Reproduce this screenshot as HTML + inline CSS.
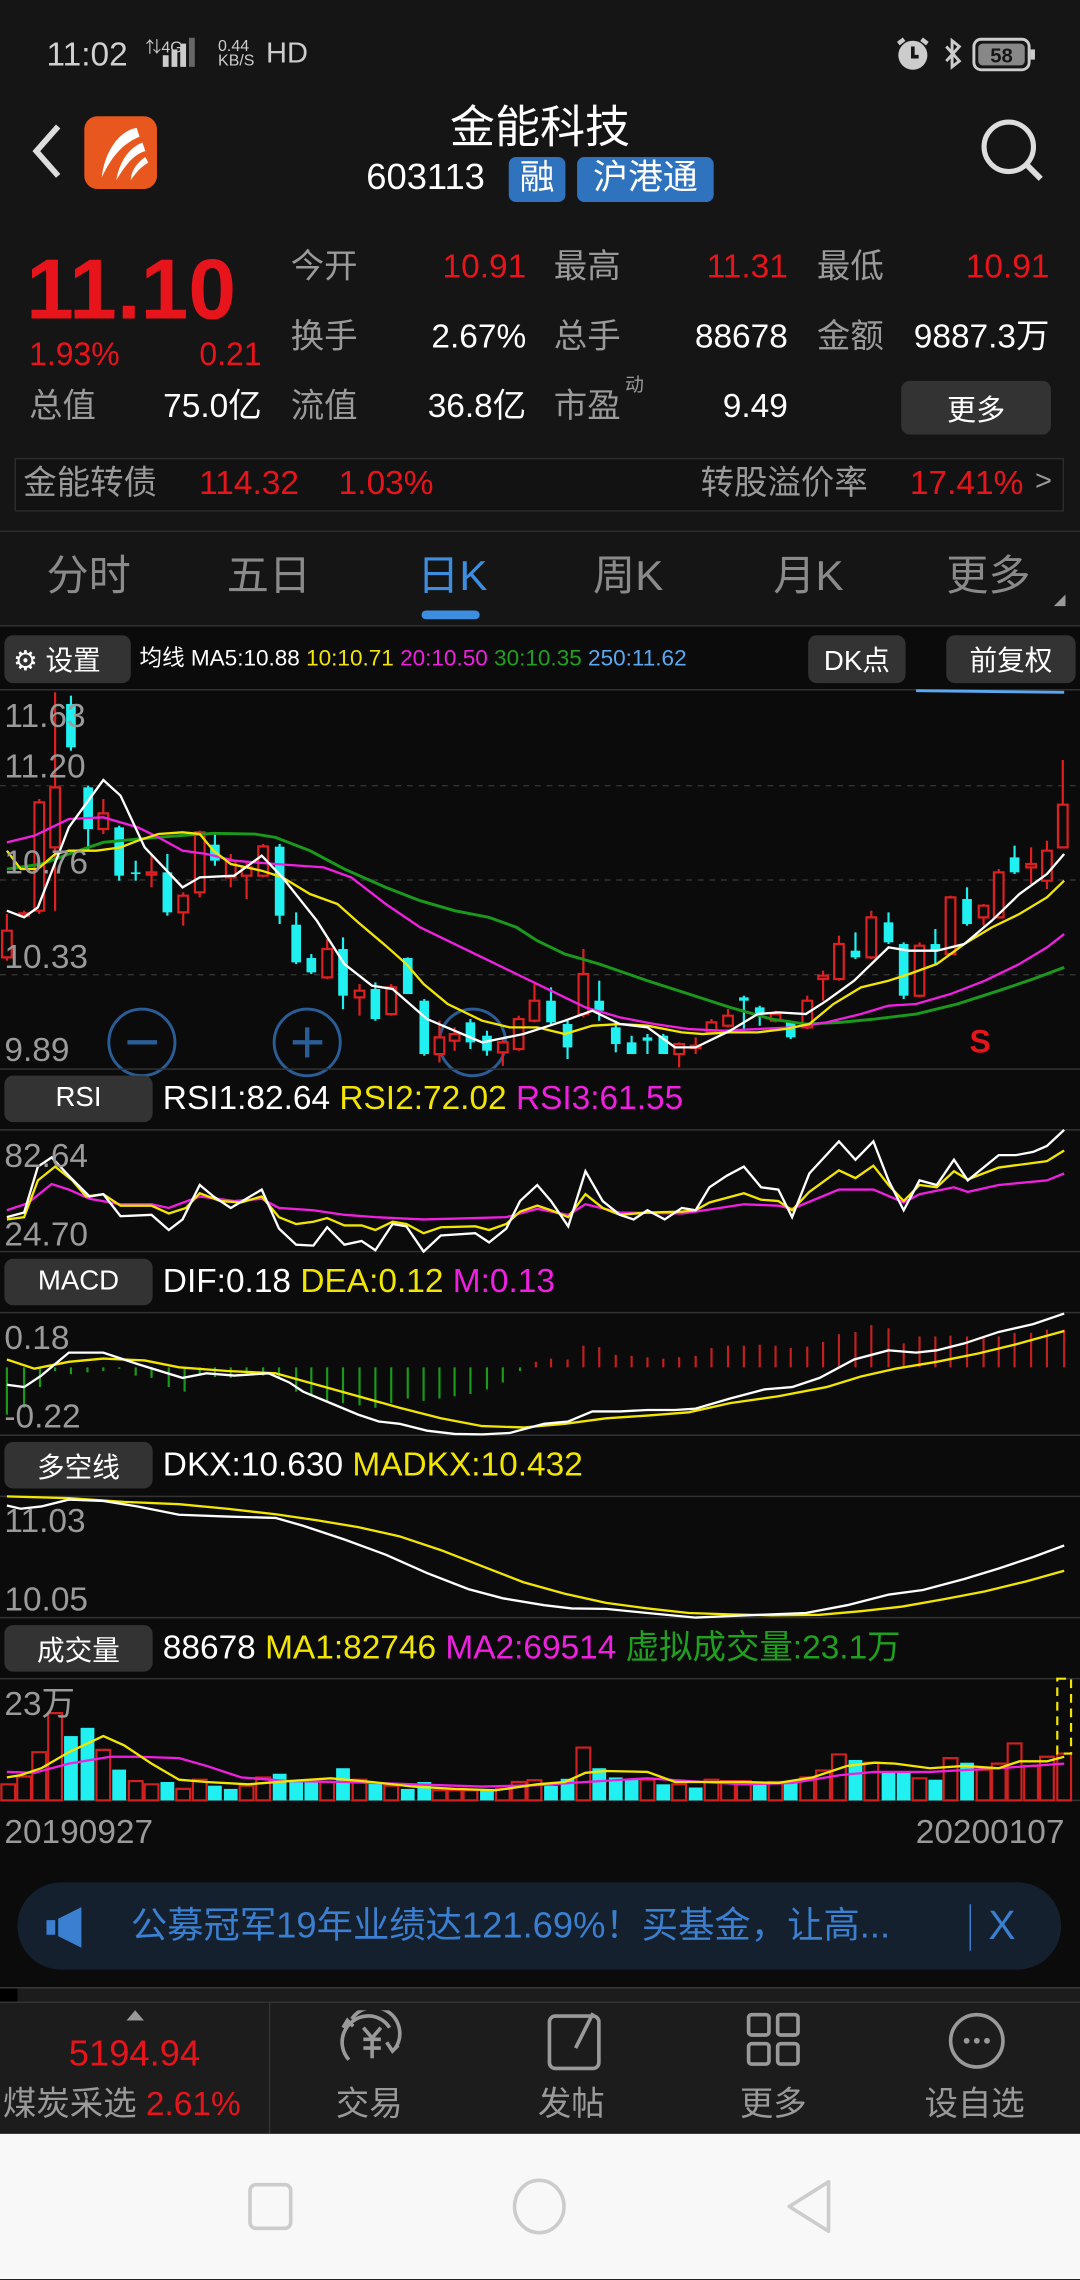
<!DOCTYPE html>
<html><head><meta charset="utf-8"><style>
*{margin:0;padding:0;box-sizing:border-box}
html,body{width:1080px;height:2280px;overflow:hidden;background:#0b0b0b}
#w{position:absolute;left:0;top:0;width:743px;height:1568px;transform:scale(1.45357);transform-origin:0 0;background:#0b0b0b;font-family:"Liberation Sans","Noto Sans CJK SC",sans-serif;color:#fff;overflow:hidden}
.a{position:absolute;white-space:nowrap;line-height:1}
.g{color:#9a9a9a}.r{color:#e8141b}.y{color:#f2e600}.m{color:#f020e0}.gr{color:#1fa01f}.b{color:#5aa8f0}
.btn{position:absolute;background:#333;border-radius:6px;color:#fff;display:flex;align-items:center;justify-content:center}
.hl{position:absolute;left:0;width:743px;height:1px;background:#2e2e2e}
.rt{text-align:right}
</style></head><body><div id="w">
<div style="position:absolute;left:0;top:0;width:743px;height:430px;background:#151515"></div>
<!-- status -->
<div class="a" style="left:32px;top:26px;font-size:23px;color:#d0d0d0">11:02</div>
<div class="a" style="left:100px;top:28px;font-size:11px;color:#ccc">⇅4G</div>
<div style="position:absolute;left:112px;top:38px;width:4px;height:8px;background:#ccc"></div>
<div style="position:absolute;left:118px;top:34px;width:4px;height:12px;background:#ccc"></div>
<div style="position:absolute;left:124px;top:30px;width:4px;height:16px;background:#ccc"></div>
<div style="position:absolute;left:130px;top:26px;width:4px;height:20px;background:#666"></div>
<div class="a" style="left:150px;top:27px;font-size:11px;color:#ccc;line-height:10px">0.44<br>KB/S</div>
<div class="a" style="left:183px;top:27px;font-size:20px;color:#ccc">HD</div>
<svg style="position:absolute;left:614px;top:24px" width="100" height="28"><circle cx="14" cy="14" r="10" fill="#ccc"/><path d="M14 8v7h4" stroke="#151515" stroke-width="2.5" fill="none"/><path d="M4 6l4-3M24 6l-4-3" stroke="#ccc" stroke-width="3"/><path d="M37 8l9 10-5 4V4l5 4-9 10" stroke="#ccc" stroke-width="2" fill="none"/><rect x="56" y="3" width="38" height="21" rx="5" fill="none" stroke="#ccc" stroke-width="2"/><rect x="59" y="6" width="32" height="15" rx="3" fill="#888"/><rect x="95" y="10" width="3" height="7" fill="#ccc"/><text x="75" y="19" font-size="14" fill="#151515" text-anchor="middle" font-weight="bold" font-family="Liberation Sans">58</text></svg>
<!-- header -->
<svg style="position:absolute;left:18px;top:84px" width="30" height="40"><path d="M22 3L7 20l15 17" stroke="#ddd" stroke-width="4" fill="none"/></svg>
<div style="position:absolute;left:58px;top:80px;width:50px;height:50px;border-radius:9px;background:#e8581e"></div>
<svg style="position:absolute;left:58px;top:80px" width="50" height="50"><path d="M36 8C24 10 14 24 12 42 18 30 24 20 38 14ZM40 18C30 22 24 32 22 44 28 34 34 26 42 24ZM42 28C36 32 32 38 32 44 36 38 40 34 44 32Z" fill="#fff"/></svg>
<div class="a" style="left:0;width:743px;text-align:center;top:72px;font-size:31px">金能科技</div>
<div class="a" style="left:252px;top:110px;font-size:25px">603113</div>
<div class="a" style="left:350px;top:108px;width:39px;height:31px;background:#2f73bf;border-radius:5px;font-size:24px;text-align:center;padding-top:3px">融</div>
<div class="a" style="left:397px;top:108px;width:94px;height:31px;background:#2f73bf;border-radius:5px;font-size:24px;text-align:center;padding-top:3px">沪港通</div>
<svg style="position:absolute;left:672px;top:80px" width="50" height="50"><circle cx="22" cy="21" r="17" stroke="#ddd" stroke-width="3.5" fill="none"/><path d="M34 33l10 10" stroke="#ddd" stroke-width="4"/></svg>
<!-- price block -->
<div class="a r" style="left:18px;top:170px;font-size:59px;font-weight:bold">11.10</div>
<div class="a r" style="left:20px;top:233px;font-size:22px">1.93%</div>
<div class="a r rt" style="left:100px;width:80px;top:233px;font-size:22px">0.21</div>
<div class="a g" style="left:20px;top:268px;font-size:23px">总值</div>
<div class="a rt" style="left:80px;width:100px;top:268px;font-size:23px">75.0亿</div>
<div class="a g" style="left:200px;top:172px;font-size:23px">今开</div><div class="a r rt" style="left:262px;width:100px;top:172px;font-size:23px">10.91</div>
<div class="a g" style="left:381px;top:172px;font-size:23px">最高</div><div class="a r rt" style="left:442px;width:100px;top:172px;font-size:23px">11.31</div>
<div class="a g" style="left:562px;top:172px;font-size:23px">最低</div><div class="a r rt" style="left:622px;width:100px;top:172px;font-size:23px">10.91</div>
<div class="a g" style="left:200px;top:220px;font-size:23px">换手</div><div class="a rt" style="left:262px;width:100px;top:220px;font-size:23px">2.67%</div>
<div class="a g" style="left:381px;top:220px;font-size:23px">总手</div><div class="a rt" style="left:442px;width:100px;top:220px;font-size:23px">88678</div>
<div class="a g" style="left:562px;top:220px;font-size:23px">金额</div><div class="a rt" style="left:602px;width:120px;top:220px;font-size:23px">9887.3万</div>
<div class="a g" style="left:200px;top:268px;font-size:23px">流值</div><div class="a rt" style="left:262px;width:100px;top:268px;font-size:23px">36.8亿</div>
<div class="a g" style="left:381px;top:268px;font-size:23px">市盈</div><div class="a g" style="left:430px;top:258px;font-size:13px">动</div><div class="a rt" style="left:442px;width:100px;top:268px;font-size:23px">9.49</div>
<div class="btn" style="left:620px;top:262px;width:103px;height:37px;font-size:20px">更多</div>
<div style="position:absolute;left:10px;top:315px;width:722px;height:37px;border:1px solid #2c2c2c;background:#121212"></div>
<div class="a g" style="left:16px;top:321px;font-size:23px">金能转债</div>
<div class="a r" style="left:137px;top:321px;font-size:23px">114.32</div>
<div class="a r" style="left:233px;top:321px;font-size:23px">1.03%</div>
<div class="a g" style="left:482px;top:321px;font-size:23px">转股溢价率</div>
<div class="a r" style="left:626px;top:321px;font-size:23px">17.41%</div>
<div class="a g" style="left:712px;top:321px;font-size:20px">&gt;</div>
<div class="hl" style="top:365px"></div>
<div class="a g" style="left:32px;top:383px;font-size:29px;color:#8a8a8a">分时</div>
<div class="a g" style="left:156px;top:383px;font-size:29px;color:#8a8a8a">五日</div>
<div class="a" style="left:287px;top:383px;font-size:29px;color:#3d8ee0">日K</div>
<div class="a g" style="left:408px;top:383px;font-size:29px;color:#8a8a8a">周K</div>
<div class="a g" style="left:532px;top:383px;font-size:29px;color:#8a8a8a">月K</div>
<div class="a g" style="left:651px;top:383px;font-size:29px;color:#8a8a8a">更多</div>
<div style="position:absolute;left:290px;top:420px;width:40px;height:6px;border-radius:3px;background:#3d8ee0"></div>
<svg style="position:absolute;left:724px;top:408px" width="10" height="10"><path d="M9 1V9H1Z" fill="#999"/></svg>
<div class="hl" style="top:430px;background:#333"></div>
<!-- toolbar -->
<div class="btn" style="left:3px;top:437px;width:87px;height:33px;font-size:19px;justify-content:flex-start;padding-left:6px">⚙&nbsp;设置</div>
<div class="a" style="left:96px;top:446px;font-size:15.5px">均线 MA5:10.88 <span class="y">10:10.71</span> <span class="m">20:10.50</span> <span class="gr">30:10.35</span> <span class="b">250:11.62</span></div>
<div class="btn" style="left:556px;top:437px;width:67px;height:33px;font-size:19px">DK点</div>
<div class="btn" style="left:651px;top:437px;width:89px;height:33px;font-size:19px">前复权</div>
<div class="hl" style="top:474px;background:#333"></div>
<!-- main chart svg -->
<svg style="position:absolute;left:0;top:426.6px" width="743" height="344" viewBox="0 0 1568 1500" preserveAspectRatio="none">
<g stroke="#333" stroke-dasharray="4 4" vector-effect="non-scaling-stroke"><path d="M0 495H1568M0 778H1568M0 1062H1568" vector-effect="non-scaling-stroke"/></g>
<path d="M1330 210L1545 215" stroke="#5aa8f0" stroke-width="2" vector-effect="non-scaling-stroke"/>
<g fill="none" stroke-width="2" vector-effect="non-scaling-stroke">
<ellipse cx="206" cy="1265" rx="48" ry="100" stroke="#2a5d95" vector-effect="non-scaling-stroke"/>
<ellipse cx="446" cy="1265" rx="48" ry="100" stroke="#2a5d95" vector-effect="non-scaling-stroke"/>
<ellipse cx="686" cy="1265" rx="48" ry="100" stroke="#2a5d95" vector-effect="non-scaling-stroke"/>
<path d="M185 1265H228M425 1265H468M446 1220V1310" stroke="#2a5d95" stroke-width="3" vector-effect="non-scaling-stroke"/>
</g>
<g id="cd" stroke-width="1.5">
<script></script>
</g>
<g fill="none" stroke-width="1.6">
<polyline vector-effect="non-scaling-stroke" stroke="#1a9a1a" stroke-width="2" points="10,745 60,730 100,700 150,665 200,655 260,645 310,638 370,640 400,650 450,690 500,745 560,800 610,840 660,870 710,890 750,920 780,960 820,1000 870,1030 940,1080 1000,1120 1060,1160 1120,1195 1170,1210 1220,1205 1270,1195 1330,1180 1390,1150 1450,1110 1500,1075 1545,1040"/>
<polyline vector-effect="non-scaling-stroke" stroke="#f020e0" points="10,665 50,645 100,595 150,590 200,620 230,650 265,690 300,700 340,720 400,730 470,740 510,770 560,850 610,920 660,970 710,1020 760,1070 800,1110 850,1160 900,1190 950,1210 1000,1225 1050,1230 1100,1225 1150,1220 1200,1205 1250,1180 1290,1155 1330,1150 1380,1120 1430,1080 1480,1030 1520,980 1545,940"/>
<polyline vector-effect="non-scaling-stroke" stroke="#f2e600" points="10,690 30,745 55,745 80,700 100,690 140,690 175,680 200,660 230,640 265,635 290,640 310,690 335,730 380,750 410,770 450,820 490,850 520,905 560,975 590,1030 615,1090 650,1150 700,1200 740,1220 780,1220 820,1240 860,1215 900,1210 940,1215 990,1235 1020,1240 1060,1235 1100,1235 1140,1225 1175,1210 1210,1150 1250,1100 1290,1080 1320,1060 1360,1030 1400,970 1440,920 1480,880 1520,830 1545,780"/>
<polyline vector-effect="non-scaling-stroke" stroke="#fff" points="10,870 35,890 55,860 100,620 150,478 175,525 210,680 265,800 290,770 340,765 380,705 410,770 460,900 500,1030 540,1095 570,1105 620,1195 700,1265 760,1240 820,1200 860,1170 900,1210 940,1220 980,1280 1010,1280 1060,1230 1100,1180 1130,1175 1170,1180 1200,1140 1240,1080 1290,980 1320,990 1360,990 1400,970 1440,900 1480,820 1520,760 1545,700"/>
</g>
</svg>
<div class="a g" style="left:3px;top:481px;font-size:23px">11.63</div>
<div class="a g" style="left:3px;top:516px;font-size:23px">11.20</div>
<div class="a g" style="left:3px;top:582px;font-size:23px">10.76</div>
<div class="a g" style="left:3px;top:647px;font-size:23px">10.33</div>
<div class="a g" style="left:3px;top:711px;font-size:23px">9.89</div>
<div class="a r" style="left:667px;top:706px;font-size:22px;font-weight:bold">S</div>
<div class="hl" style="top:735px;background:#333"></div>
<!-- sub labels -->
<div class="btn" style="left:3px;top:740px;width:102px;height:32px;font-size:19px">RSI</div>
<div class="a" style="left:112px;top:744px;font-size:23px">RSI1:82.64 <span class="y">RSI2:72.02</span> <span class="m">RSI3:61.55</span></div>
<div class="btn" style="left:3px;top:866px;width:102px;height:32px;font-size:19px">MACD</div>
<div class="a" style="left:112px;top:870px;font-size:23px">DIF:0.18 <span class="y">DEA:0.12</span> <span class="m">M:0.13</span></div>
<div class="btn" style="left:3px;top:992px;width:102px;height:32px;font-size:19px">多空线</div>
<div class="a" style="left:112px;top:996px;font-size:23px">DKX:10.630 <span class="y">MADKX:10.432</span></div>
<div class="btn" style="left:3px;top:1118px;width:102px;height:32px;font-size:19px">成交量</div>
<div class="a" style="left:112px;top:1122px;font-size:23px">88678 <span class="y">MA1:82746</span> <span class="m">MA2:69514</span> <span class="gr">虚拟成交量:23.1万</span></div>
<svg style="position:absolute;left:0;top:770.6px" width="743" height="495.4" viewBox="0 0 1568 1568" preserveAspectRatio="none">
<g stroke="#333" stroke-width="1"><path vector-effect="non-scaling-stroke" d="M0 20H1568M0 285H1568M0 418H1568M0 685H1568M0 818H1568M0 1082H1568M0 1215H1568M0 1480H1568"/></g>
<g fill="none" stroke-width="1.6">
<polyline vector-effect="non-scaling-stroke" stroke="#f020e0" points="10,195 40,180 75,138 100,150 130,170 175,182 220,182 245,190 290,165 340,175 380,170 405,190 455,195 500,205 545,210 615,215 690,212 735,210 780,192 825,205 850,182 900,200 990,202 1010,198 1080,182 1130,185 1150,192 1218,150 1268,150 1312,178 1335,160 1385,145 1405,155 1450,140 1520,130 1545,115"/>
<polyline vector-effect="non-scaling-stroke" stroke="#f2e600" points="10,215 35,210 55,130 80,100 105,130 125,165 150,160 175,185 220,185 245,202 270,190 290,158 320,175 350,178 380,165 405,210 430,225 455,220 475,212 500,228 525,228 545,238 570,220 590,225 615,245 640,232 690,230 710,238 735,225 755,198 780,185 800,195 825,210 850,160 875,190 900,205 940,200 990,198 1010,195 1030,178 1080,158 1105,172 1130,175 1150,195 1175,155 1218,108 1242,125 1268,98 1290,140 1312,175 1335,140 1360,145 1385,110 1405,128 1450,102 1520,88 1545,65"/>
<polyline vector-effect="non-scaling-stroke" stroke="#fff" points="10,210 35,200 55,100 75,80 100,120 130,165 150,160 175,208 220,205 245,238 265,215 290,140 310,165 335,190 380,150 405,235 430,270 455,272 475,232 500,270 525,262 545,282 570,225 590,230 615,285 640,250 690,245 710,265 735,235 755,175 780,140 800,175 825,230 850,110 875,175 900,205 920,215 940,195 965,215 990,190 1010,195 1030,145 1055,120 1080,100 1105,145 1130,150 1150,210 1175,115 1218,45 1242,85 1268,45 1290,130 1312,195 1335,130 1360,140 1385,85 1405,130 1450,75 1475,75 1500,68 1520,55 1545,20"/>
</g>
<g stroke="#1a9a1a" stroke-width="1.5"><path vector-effect="non-scaling-stroke" d="M10 537V640M35 537V625M58 537V580M80 537V545M103 537V552M127 537V548M150 537V545M173 537V540M197 537V555M220 537V560M245 537V580M268 537V590M290 537V555M312 537V558M335 537V560M358 537V555M382 537V555M405 537V560M430 537V590M452 537V600M475 537V610M498 537V615M522 537V620M545 537V625M568 537V615M592 537V605M615 537V610M638 537V605M660 537V600M683 537V595M707 537V585M730 537V570M755 537V545"/></g>
<g stroke="#c02020" stroke-width="1.5"><path vector-effect="non-scaling-stroke" d="M778 537V525M800 537V518M824 537V520M847 537V490M870 537V493M894 537V510M917 537V512M940 537V515M963 537V518M986 537V515M1010 537V512M1033 537V495M1057 537V490M1080 537V490M1103 537V488M1126 537V490M1148 537V495M1172 537V492M1195 537V482M1218 537V465M1242 537V460M1265 537V445M1290 537V452M1312 537V485M1335 537V470M1358 537V470M1380 537V468M1404 537V470M1428 537V470M1450 537V470M1473 537V462M1497 537V462M1520 537V455M1545 537V455"/></g>
<g fill="none" stroke-width="1.6">
<polyline vector-effect="non-scaling-stroke" stroke="#f2e600" points="10,520 50,540 100,525 150,518 210,522 260,537 330,545 400,550 460,575 520,600 580,625 640,648 700,665 760,668 820,660 880,648 940,642 1000,635 1060,615 1130,600 1200,580 1250,557 1300,540 1360,525 1420,507 1480,485 1545,458"/>
<polyline vector-effect="non-scaling-stroke" stroke="#fff" points="10,575 35,580 60,555 100,505 150,505 200,530 265,560 300,550 340,555 390,550 420,570 440,590 480,615 520,640 550,655 580,660 620,675 660,682 700,683 740,680 790,660 825,655 860,633 900,633 940,630 980,630 1010,627 1060,605 1110,585 1150,580 1190,560 1240,520 1290,500 1330,505 1360,500 1400,485 1450,460 1500,443 1545,420"/>
<polyline vector-effect="non-scaling-stroke" stroke="#f2e600" points="10,818 100,822 180,830 260,835 330,845 400,857 460,870 520,885 580,905 640,935 700,970 760,1005 820,1030 880,1050 940,1062 1000,1072 1060,1075 1120,1077 1190,1076 1250,1068 1310,1058 1370,1042 1430,1025 1490,1003 1545,980"/>
<polyline vector-effect="non-scaling-stroke" stroke="#fff" points="10,838 30,845 60,840 100,825 150,828 200,840 260,858 330,862 400,865 440,882 500,912 560,945 620,985 680,1020 730,1040 790,1055 830,1062 880,1063 940,1072 1010,1082 1070,1078 1120,1075 1170,1072 1230,1055 1290,1032 1340,1022 1400,998 1450,975 1500,950 1545,925"/>
</g>
<g id="vol"></g>
<rect x="1535" y="1215" width="20" height="163" fill="none" stroke="#f2e600" stroke-dasharray="6 4" vector-effect="non-scaling-stroke" stroke-width="1.5"/>
<g fill="none" stroke-width="1.6">
<polyline vector-effect="non-scaling-stroke" stroke="#f020e0" points="10,1418 50,1420 100,1400 160,1385 200,1385 260,1388 300,1405 350,1430 420,1438 500,1440 600,1445 700,1450 780,1447 850,1440 940,1432 1000,1438 1080,1445 1150,1442 1220,1425 1270,1418 1350,1418 1450,1410 1545,1400"/>
<polyline vector-effect="non-scaling-stroke" stroke="#f2e600" points="10,1430 30,1425 60,1410 100,1375 150,1340 180,1360 220,1400 260,1435 300,1440 360,1445 420,1438 480,1432 540,1440 600,1450 660,1455 720,1458 780,1445 820,1440 850,1420 880,1416 940,1418 980,1440 1030,1440 1080,1440 1130,1442 1180,1430 1230,1405 1270,1398 1300,1400 1350,1410 1400,1405 1450,1410 1480,1395 1520,1395 1545,1385"/>
</g>
</svg>
<div class="a g" style="left:3px;top:784px;font-size:23px">82.64</div>
<div class="a g" style="left:3px;top:838px;font-size:23px">24.70</div>
<div class="a g" style="left:3px;top:909px;font-size:23px">0.18</div>
<div class="a g" style="left:3px;top:963px;font-size:23px">-0.22</div>
<div class="a g" style="left:3px;top:1035px;font-size:23px">11.03</div>
<div class="a g" style="left:3px;top:1089px;font-size:23px">10.05</div>
<div class="a g" style="left:3px;top:1161px;font-size:23px">23万</div>
<div class="a g" style="left:3px;top:1249px;font-size:23px">20190927</div>
<div class="a g" style="left:630px;top:1249px;font-size:23px">20200107</div>
<!-- ad -->
<div style="position:absolute;left:12px;top:1295px;width:718px;height:60px;border-radius:30px;background:#15202e"></div>
<svg style="position:absolute;left:30px;top:1310px" width="36" height="32"><path d="M2 11h6v10H2zM10 10L26 2v28L10 22z" fill="#3a7fd0"/></svg>
<div class="a" style="left:90px;top:1313px;font-size:25px;color:#3a7fd0">公募冠军19年业绩达121.69%！买基金，让高...</div>
<div style="position:absolute;left:667px;top:1310px;width:1px;height:32px;background:#3a7fd0"></div>
<div class="a" style="left:680px;top:1311px;font-size:28px;color:#3a7fd0">X</div>
<div class="hl" style="top:1367px;background:#3a3a3a"></div>
<div style="position:absolute;left:0;top:1368px;width:743px;height:100px;background:#1c1c1c"></div>
<div style="position:absolute;left:0;top:1368px;width:12px;height:9px;background:#000"></div>
<div class="hl" style="top:1377px;background:#333"></div>
<div style="position:absolute;left:185px;top:1378px;width:1px;height:90px;background:#333"></div>
<svg style="position:absolute;left:86px;top:1381px" width="14" height="10"><path d="M1 9L7 2l6 7z" fill="#999"/></svg>
<div class="a r" style="left:0;width:185px;text-align:center;top:1401px;font-size:25px">5194.94</div>
<div class="a" style="left:2px;top:1436px;font-size:23px;color:#9a9a9a">煤炭采选 <span class="r">2.61%</span></div>
<svg style="position:absolute;left:232px;top:1383px" width="330" height="42" fill="none" stroke="#999" stroke-width="2.5">
<path d="M36 12A17 17 0 0 0 20 4A18 18 0 0 0 8 34"/><path d="M10 6A18 18 0 0 1 40 26" /><path d="M4 12l3-5 4 4M34 22l4 6 4-4"/><path d="M18 12l6 7 6-7M24 19v14M18 20h12M18 26h12"/>
<rect x="146" y="4" width="34" height="36" rx="4"/><path d="M176 2l-12 24"/>
<rect x="283" y="3" width="14" height="14" rx="2"/><rect x="303" y="3" width="14" height="14" rx="2"/><rect x="283" y="23" width="14" height="14" rx="2"/><rect x="303" y="23" width="14" height="14" rx="2"/>
</svg>
<svg style="position:absolute;left:650px;top:1383px" width="44" height="42"><circle cx="22" cy="21" r="18" fill="none" stroke="#999" stroke-width="2.5"/><circle cx="15" cy="21" r="2" fill="#999"/><circle cx="22" cy="21" r="2" fill="#999"/><circle cx="29" cy="21" r="2" fill="#999"/></svg>
<div class="a" style="left:231px;top:1436px;font-size:23px;color:#9a9a9a">交易</div>
<div class="a" style="left:370px;top:1436px;font-size:23px;color:#9a9a9a">发帖</div>
<div class="a" style="left:509px;top:1436px;font-size:23px;color:#9a9a9a">更多</div>
<div class="a" style="left:636px;top:1436px;font-size:23px;color:#9a9a9a">设自选</div>
<div style="position:absolute;left:0;top:1468px;width:743px;height:100px;background:#f8f8f8"></div>
<svg style="position:absolute;left:0;top:1468px" width="743" height="100" fill="none" stroke="#ccc" stroke-width="2.5"><rect x="172" y="35" width="28" height="30" rx="4"/><ellipse cx="371" cy="50" rx="17" ry="18"/><path d="M570 33L543 50l27 17z" stroke-linejoin="round"/></svg>
</div>
<script>
(function(){
var C=[[10,'r',930,1010,880,1020],[35,'r',878,885,870,890],[57,'r',545,870,535,880],[80,'r',500,680,215,870],[103,'c',250,380,225,390],[128,'c',500,625,495,690],[150,'r',578,625,535,640],[173,'c',620,765,615,780],[197,'c',755,760,720,780],[220,'r',755,762,700,800],[243,'c',755,875,700,885],[266,'r',825,875,815,915],[290,'r',635,815,630,830],[312,'c',672,720,640,735],[335,'r',720,770,700,800],[358,'r',740,765,720,835],[382,'r',677,765,670,770],[406,'c',678,885,670,910],[430,'c',912,1025,875,1030],[452,'c',1012,1055,1000,1060],[475,'r',985,1070,955,1075],[498,'c',985,1125,950,1165],[522,'r',1110,1130,1090,1185],[545,'c',1105,1195,1085,1200],[568,'r',1100,1180,1090,1185],[592,'c',1012,1120,1010,1120],[616,'c',1140,1300,1135,1305],[638,'r',1250,1300,1200,1325],[660,'r',1240,1260,1220,1290],[683,'c',1205,1265,1195,1285],[707,'c',1245,1290,1230,1305],[730,'r',1265,1295,1250,1335],[753,'r',1195,1285,1185,1290],[776,'r',1140,1200,1090,1205],[800,'c',1140,1205,1100,1210],[824,'c',1210,1280,1200,1315],[847,'r',1060,1180,985,1190],[870,'c',1140,1170,1080,1200],[894,'c',1220,1270,1200,1295],[917,'c',1265,1300,1245,1300],[940,'c',1250,1260,1240,1300],[963,'c',1245,1300,1240,1300],[986,'r',1270,1300,1265,1340],[1010,'r',1275,1282,1250,1300],[1033,'r',1205,1235,1195,1240],[1057,'r',1185,1215,1165,1220],[1080,'c',1130,1140,1125,1230],[1103,'c',1160,1180,1155,1215],[1126,'r',1180,1200,1170,1205],[1148,'c',1205,1250,1200,1255],[1172,'r',1140,1220,1125,1225],[1195,'r',1065,1075,1050,1140],[1218,'r',970,1075,945,1080],[1242,'c',990,1010,935,1015],[1265,'r',890,1010,870,1015],[1290,'c',905,965,875,970],[1312,'c',970,1125,965,1135],[1335,'r',975,1125,965,1130],[1358,'c',970,990,925,1030],[1380,'r',830,1000,825,1000],[1404,'c',835,910,800,915],[1428,'r',855,890,850,915],[1450,'r',755,890,745,890],[1473,'c',710,755,675,760],[1497,'r',730,740,680,790],[1520,'r',690,780,660,805],[1543,'r',552,680,418,680]];
var ns='http://www.w3.org/2000/svg',g=document.getElementById('cd');
C.forEach(function(c){var col=c[1]=='r'?'#e02020':'#20f0f0';
var l=document.createElementNS(ns,'path');l.setAttribute('d','M'+c[0]+' '+c[4]+'V'+c[5]);l.setAttribute('stroke',col);l.setAttribute('vector-effect','non-scaling-stroke');l.setAttribute('stroke-width','1.5');g.appendChild(l);
var r=document.createElementNS(ns,'rect');r.setAttribute('x',c[0]-7);r.setAttribute('width',14);r.setAttribute('y',c[2]);r.setAttribute('height',Math.max(3,c[3]-c[2]));
if(c[1]=='r'){r.setAttribute('fill','#0b0b0b');r.setAttribute('stroke',col);r.setAttribute('stroke-width','1.5');r.setAttribute('vector-effect','non-scaling-stroke');}else r.setAttribute('fill',col);g.appendChild(r);});
var V=[[12,'r',1445],[35,'r',1428],[57,'r',1375],[80,'r',1290],[103,'c',1340],[127,'c',1322],[150,'r',1370],[173,'c',1413],[197,'r',1438],[220,'r',1445],[243,'c',1440],[266,'r',1455],[290,'r',1435],[312,'c',1448],[335,'c',1455],[358,'r',1448],[382,'r',1430],[406,'c',1422],[430,'c',1438],[452,'c',1440],[475,'r',1440],[498,'c',1410],[522,'r',1435],[545,'c',1443],[568,'r',1448],[592,'c',1455],[616,'c',1440],[638,'r',1458],[660,'r',1458],[683,'r',1458],[707,'c',1455],[730,'r',1455],[753,'r',1440],[776,'r',1436],[800,'c',1448],[824,'c',1433],[847,'r',1365],[870,'c',1410],[894,'c',1430],[917,'c',1435],[940,'r',1435],[963,'c',1445],[986,'r',1445],[1010,'c',1452],[1033,'r',1435],[1057,'r',1438],[1080,'r',1438],[1103,'c',1442],[1126,'r',1440],[1148,'c',1442],[1172,'r',1430],[1195,'r',1415],[1218,'r',1380],[1242,'c',1392],[1265,'r',1398],[1290,'c',1420],[1312,'c',1420],[1335,'r',1432],[1358,'c',1435],[1380,'r',1388],[1404,'c',1398],[1428,'r',1413],[1450,'r',1400],[1473,'r',1356],[1497,'r',1405],[1520,'r',1385],[1545,'r',1378]];
var vg=document.getElementById('vol');
V.forEach(function(v){var r=document.createElementNS(ns,'rect');r.setAttribute('x',v[0]-10);r.setAttribute('width',20);r.setAttribute('y',v[2]);r.setAttribute('height',1480-v[2]);
if(v[1]=='r'){r.setAttribute('fill','none');r.setAttribute('stroke','#d02020');r.setAttribute('stroke-width','1.5');r.setAttribute('vector-effect','non-scaling-stroke');}else r.setAttribute('fill','#20f0f0');vg.appendChild(r);});
})();
</script>
</body></html>
